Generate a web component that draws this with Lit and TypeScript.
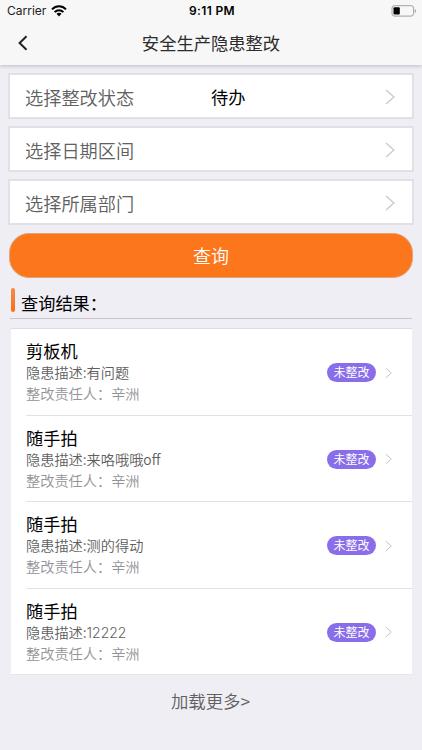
import { LitElement, html, css, svg } from "lit";
import { customElement } from "lit/decorators.js";

interface Field { label: string; value?: string; }
interface Hazard { name: string; desc: string; tail?: string; owner: string; }

const FIELDS: Field[] = [
  { label: "选择整改状态", value: "待办" },
  { label: "选择日期区间" },
  { label: "选择所属部门" },
];

const HAZARDS: Hazard[] = [
  { name: "剪板机", desc: "有问题", owner: "辛洲" },
  { name: "随手拍", desc: "来咯哦哦", tail: "off", owner: "辛洲" },
  { name: "随手拍", desc: "测的得动", owner: "辛洲" },
  { name: "随手拍", desc: "", tail: "12222", owner: "辛洲" },
];

const chevron = (w: number, h: number, cls: string) => html`
  <svg class=${cls} width=${w} height=${h} viewBox="0 0 10 16">
    ${svg`<path d="M1 1L9 8L1 15" fill="none" stroke="currentColor" stroke-width="1.2"/>`}
  </svg>`;

@customElement("app-root")
export class AppRoot extends LitElement {
  static styles = css`
    :host {
      display: flex;
      flex-direction: column;
      box-sizing: border-box;
      width: 422px;
      height: 750px;
      overflow: hidden;
      background: #efeef5;
      color: #000;
      font-family: "Noto Sans CJK SC", sans-serif;
      font-size: 17.2px;
      white-space: nowrap;
    }
    * { box-sizing: border-box; }
    svg { display: block; flex: none; }
    .top {
      flex: none;
      height: 65px;
      background: #f7f7f7;
      box-shadow: 0 1px 4px rgba(0, 0, 0, 0.22);
    }
    .status {
      display: grid;
      grid-template-columns: 1fr auto 1fr;
      align-items: center;
      height: 22px;
      padding: 0 5px 0 7px;
      font-family: Inter, sans-serif;
      font-size: 12px;
      line-height: 22px;
    }
    .carrier { display: flex; align-items: center; gap: 5px; color: #222; }
    .clock { font-weight: 600; letter-spacing: 0.35px; }
    .battery { justify-self: end; }
    .nav {
      display: grid;
      grid-template-columns: 40px 1fr 40px;
      align-items: center;
      height: 41px;
      color: #2c2c2c;
    }
    .back { margin-left: 18px; }
    .title { text-align: center; font-size: 17.3px; line-height: 40px; }
    .fields { display: flex; flex-direction: column; gap: 7px; padding: 8px 8px 0; }
    .field {
      display: flex;
      align-items: center;
      height: 46px;
      padding: 2px 17px 0 15px;
      border: 2px solid #e0e0e5;
      background: #fff;
    }
    .label { width: 186px; font-size: 18.2px; font-weight: 350; line-height: 40px; color: #606060; }
    .value { flex: 1; font-size: 17.2px; line-height: 40px; }
    .arrow { color: #c7c7cc; }
    .query {
      flex: none;
      height: 45px;
      margin: 8px 9px 0;
      padding: 0;
      border: 1px solid #e0a37c;
      border-radius: 20px;
      background: #fc761b;
      color: #fff;
      font: 350 18px/43px "Noto Sans CJK SC", sans-serif;
    }
    .heading {
      display: flex;
      flex: none;
      height: 31px;
      margin: 10px 10px 0;
      padding-left: 1px;
      gap: 6px;
      border-bottom: 1px solid #c8c7cc;
    }
    .bar { width: 4px; height: 24px; border-radius: 2px; background: linear-gradient(#f58a4c, #fc6f12); }
    .heading-text { line-height: 30px; }
    .list {
      flex: none;
      margin: 9px 10px 0 11px;
      padding-left: 15px;
      border-top: 1px solid #dddce2;
      border-bottom: 1px solid #e6e5ea;
      background: #fff;
    }
    .item {
      display: flex;
      align-items: center;
      height: 86.5px;
      padding: 2px 20px 0 0;
      border-bottom: 1px solid #e2e2e4;
    }
    .item:last-child { height: 85.5px; border-bottom: 0; }
    .body { flex: 1; padding-bottom: 2px; }
    .name { line-height: 23px; }
    .desc { font-size: 14.2px; font-weight: 350; line-height: 21px; color: #606060; }
    .tail { font-family: Inter, sans-serif; font-size: 14px; font-weight: 300; }
    .tail.word { font-family: "Noto Sans CJK SC", sans-serif; font-size: 13.8px; font-weight: 350; }
    .owner { font-size: 14.2px; font-weight: 350; line-height: 21px; color: #949498; }
    .badge {
      width: 49px;
      height: 19px;
      margin-right: 9px;
      border-radius: 10px;
      background: #8a6de9;
      color: #fff;
      font-size: 12px;
      line-height: 18px;
      text-align: center;
    }
    .small { color: #b9b9be; }
    .more { margin: 13px 1px 0 0; text-align: center; font-size: 17.4px; font-weight: 350; line-height: 26px; color: #606060; }
  `;

  render() {
    return html`
      <header class="top">
        <div class="status">
          <div class="carrier">
            <span>Carrier</span>
            <svg width="16" height="12" viewBox="0 0 16 12">
              <g fill="none" stroke="#000" stroke-width="2">
                <path d="M1 4.4C5 .2 11 .2 15 4.4"/>
                <path d="M3.6 7.1C6.2 4.5 9.8 4.5 12.4 7.1"/>
              </g>
              <path d="M5.5 8.8C6.9 7.5 9.1 7.5 10.5 8.8L8 11.4Z"/>
            </svg>
          </div>
          <div class="clock">9:11 PM</div>
          <svg class="battery" width="26" height="12" viewBox="0 0 26 12">
            <rect x="1" y=".7" width="21.6" height="10.4" rx="2.4" fill="none" stroke="#999" stroke-width=".9"/>
            <rect x="2.5" y="2.2" width="6.3" height="7.4" rx="1"/>
            <path d="M23.8 4V8C25.3 7.2 25.3 4.8 23.8 4Z" fill="#999"/>
          </svg>
        </div>
        <div class="nav">
          <svg class="back" width="10" height="16" viewBox="0 0 10 16">
            <path d="M8.5 1.2L1.6 8L8.5 14.8" fill="none" stroke="#222" stroke-width="2"/>
          </svg>
          <div class="title">安全生产隐患整改</div>
        </div>
      </header>
      <div class="fields">
        ${FIELDS.map((f) => html`
          <div class="field">
            <span class="label">${f.label}</span>
            <span class="value">${f.value ?? ""}</span>
            ${chevron(10, 16, "arrow")}
          </div>`)}
      </div>
      <button class="query">查询</button>
      <div class="heading">
        <span class="bar"></span>
        <span class="heading-text">查询结果：</span>
      </div>
      <div class="list">
        ${HAZARDS.map((h) => html`
          <div class="item">
            <div class="body">
              <div class="name">${h.name}</div>
              <div class="desc">隐患描述:${h.desc}${h.tail ? html`<span class="tail ${h.desc ? "word" : ""}">${h.tail}</span>` : ""}</div>
              <div class="owner">整改责任人：${h.owner}</div>
            </div>
            <span class="badge">未整改</span>
            ${chevron(7, 12, "small")}
          </div>`)}
      </div>
      <div class="more">加载更多&gt;</div>
    `;
  }
}
